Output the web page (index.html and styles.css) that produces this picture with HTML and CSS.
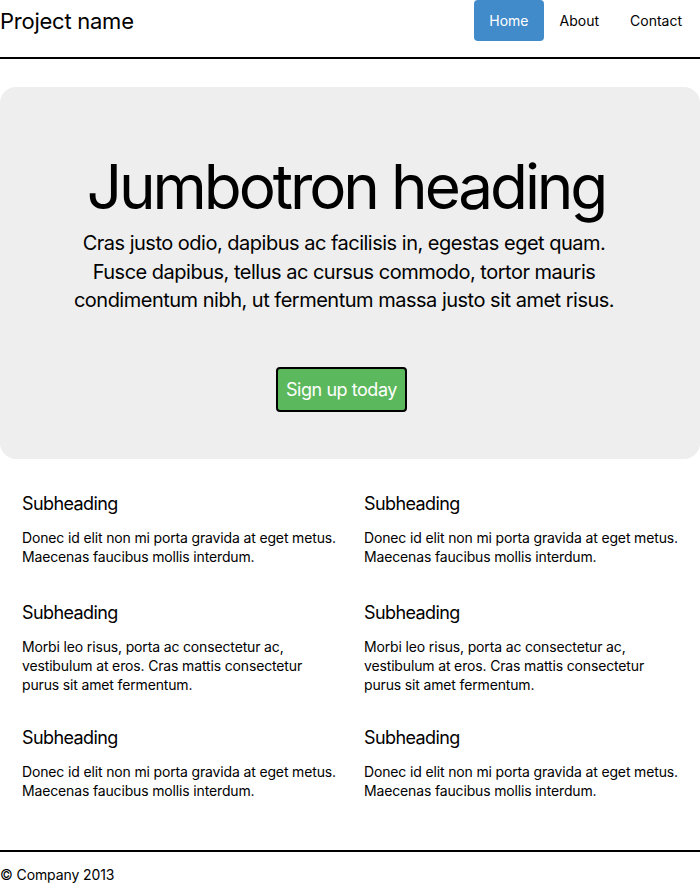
FILE: index.html
```html
<!DOCTYPE html>
<html>
<head>
<meta charset="utf-8">
<link rel="stylesheet" href="styles.css">
</head>
<body>
<div class="header">
  <h3 class="brand">Project name</h3>
  <ul class="nav">
    <li><a class="active">Home</a></li>
    <li><a>About</a></li>
    <li><a>Contact</a></li>
  </ul>
</div>
<div class="jumbotron">
  <h1>Jumbotron heading</h1>
  <p class="lead">Cras justo odio, dapibus ac facilisis in, egestas eget quam. Fusce dapibus, tellus ac cursus commodo, tortor mauris condimentum nibh, ut fermentum massa justo sit amet risus.</p>
  <a class="btn">Sign up today</a>
</div>
<div class="marketing">
  <div class="item first"><h4>Subheading</h4><p>Donec id elit non mi porta gravida at eget metus. Maecenas faucibus mollis interdum.</p></div>
  <div class="item first"><h4>Subheading</h4><p>Donec id elit non mi porta gravida at eget metus. Maecenas faucibus mollis interdum.</p></div>
  <div class="item"><h4>Subheading</h4><p>Morbi leo risus, porta ac consectetur ac, vestibulum at eros. Cras mattis consectetur purus sit amet fermentum.</p></div>
  <div class="item"><h4>Subheading</h4><p>Morbi leo risus, porta ac consectetur ac, vestibulum at eros. Cras mattis consectetur purus sit amet fermentum.</p></div>
  <div class="item"><h4>Subheading</h4><p>Donec id elit non mi porta gravida at eget metus. Maecenas faucibus mollis interdum.</p></div>
  <div class="item"><h4>Subheading</h4><p>Donec id elit non mi porta gravida at eget metus. Maecenas faucibus mollis interdum.</p></div>
</div>
<div class="footer">© Company 2013</div>
</body>
</html>
```
FILE: styles.css
```css
* { box-sizing: border-box; }
body {
  margin: 0;
  font-family: Inter, "Noto Sans", sans-serif;
  color: #000;
  background: #fff;
}
.header {
  display: flex;
  justify-content: space-between;
  align-items: flex-start;
  height: 59px;
  border-bottom: 2px solid #000;
}
.brand {
  margin: 0;
  font-size: 22px;
  font-weight: 400;
  line-height: 42px;
  letter-spacing: -0.25px;
}
.nav {
  list-style: none;
  margin: 0 3px 0 0;
  padding: 0;
  display: flex;
}
.nav a {
  display: block;
  padding: 0 15px;
  height: 41px;
  line-height: 41px;
  font-size: 14px;
  border-radius: 4px;
}
.nav li:first-child { margin-left: 1px; }
.nav li + li { margin-left: 1px; }
.nav a.active {
  background: #428bca;
  color: #fff;
}
.jumbotron {
  margin-top: 28px;
  background: #eee;
  border-radius: 16px;
  height: 372px;
  text-align: center;
  padding: 58px 76px 0 64px;
}
.jumbotron h1 {
  margin: 0 -22px 0 -18px;
  font-size: 62px;
  font-weight: 400;
  line-height: 84px;
  letter-spacing: -3.1px;
}
.lead {
  margin: 0;
  font-size: 20px;
  line-height: 28.5px;
  letter-spacing: -0.5px;
}
.btn {
  display: inline-block;
  margin-top: 52px;
  margin-right: 5px;
  background: #5cb85c;
  color: #fff;
  border: 2px solid #000;
  border-radius: 4px;
  font-size: 18px;
  letter-spacing: -0.45px;
  padding: 0 8px;
  height: 45px;
  line-height: 41px;
}
.marketing {
  display: grid;
  grid-template-columns: 320px 320px;
  column-gap: 22px;
  row-gap: 29px;
  padding: 30px 0 0 22px;
}
.item.first { margin-bottom: 3px; }
.item h4 {
  margin: 0 0 9px;
  font-size: 18px;
  font-weight: 400;
  line-height: 30px;
  letter-spacing: -0.6px;
}
.item p {
  margin: 0;
  font-size: 14px;
  line-height: 19px;
  letter-spacing: -0.15px;
}
.footer {
  margin-top: 50px;
  border-top: 2px solid #000;
  font-size: 14px;
  letter-spacing: -0.1px;
  padding-top: 14px;
}
```
